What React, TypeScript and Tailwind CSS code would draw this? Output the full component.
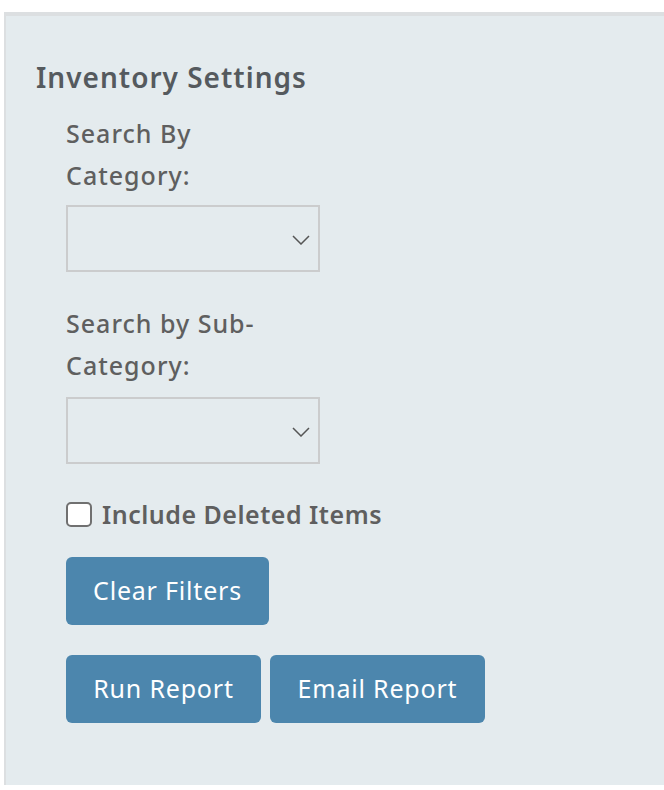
const font = { fontFamily: '"Noto Sans", "Open Sans", sans-serif' };

function Chevron() {
  return (
    <svg width={18} height={10} viewBox="0 0 18 10" className="absolute right-[8px] top-[28px]">
      <path d="M1 1 L9 9 L17 1" fill="none" stroke="#555" strokeWidth={1.5} />
    </svg>
  );
}

function SelectBox() {
  return (
    <div className="relative h-[67px] w-[254px] border-2 border-[#cbcccd] bg-[#e4ebee]">
      <Chevron />
    </div>
  );
}

function Button({ label, w }: { label: string; w: string }) {
  return (
    <button
      className={`h-[68px] ${w} rounded-[6px] bg-[#4c86ad] text-[25px] tracking-[0.8px] text-white`}
      style={font}
    >
      {label}
    </button>
  );
}

export default function App() {
  return (
    <div className="min-h-[790px] bg-white pt-[12px]" style={font}>
      <div className="ml-[4px] h-[773px] border-t-4 border-l-2 border-[#dcdfe1] bg-[#e4ebee] pl-[30px] pt-[41px]">
        <h2 className="text-[28px] font-semibold leading-[40px] tracking-[1px] text-[#555a5e]">
          Inventory Settings
        </h2>
        <div className="pl-[30px] text-[#5f5f5f]">
          <label className="mt-[15px] block w-[200px] text-[25px] font-medium leading-[42px] tracking-[1px]">
            Search By Category:
          </label>
          <div className="mt-[9px]">
            <SelectBox />
          </div>
          <label className="mt-[30px] block w-[200px] text-[25px] font-medium leading-[42px] tracking-[1px]">
            Search by Sub-Category:
          </label>
          <div className="mt-[11px]">
            <SelectBox />
          </div>
          <div className="mt-[35px] flex items-center gap-[10px]">
            <span className="h-[25px] w-[26px] rounded-[5px] border-2 border-[#707070] bg-white" />
            <span className="text-[25px] font-semibold leading-[30px] tracking-[0.5px]">
              Include Deleted Items
            </span>
          </div>
          <div className="mt-[28px]">
            <Button label="Clear Filters" w="w-[203px]" />
          </div>
          <div className="mt-[30px] flex gap-[9px]">
            <Button label="Run Report" w="w-[195px]" />
            <Button label="Email Report" w="w-[215px]" />
          </div>
        </div>
      </div>
    </div>
  );
}
